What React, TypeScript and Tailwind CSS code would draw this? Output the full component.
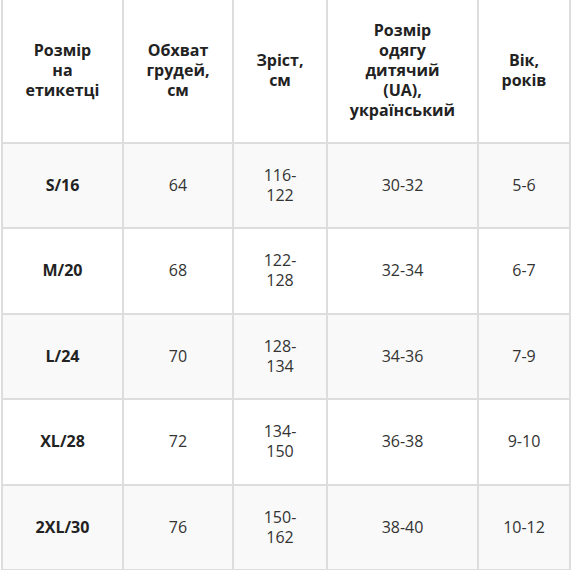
import React from "react";

const headers: string[][] = [
  ["Розмір", "на", "етикетці"],
  ["Обхват", "грудей,", "см"],
  ["Зріст,", "см"],
  ["Розмір", "одягу", "дитячий", "(UA),", "український"],
  ["Вік,", "років"],
];

const rows: string[][][] = [
  [["S/16"], ["64"], ["116-", "122"], ["30-32"], ["5-6"]],
  [["M/20"], ["68"], ["122-", "128"], ["32-34"], ["6-7"]],
  [["L/24"], ["70"], ["128-", "134"], ["34-36"], ["7-9"]],
  [["XL/28"], ["72"], ["134-", "150"], ["36-38"], ["9-10"]],
  [["2XL/30"], ["76"], ["150-", "162"], ["38-40"], ["10-12"]],
];

function Lines({ lines }: { lines: string[] }) {
  return (
    <>
      {lines.map((l, i) => (
        <span key={i} className="block whitespace-nowrap">
          {l}
        </span>
      ))}
    </>
  );
}

export default function App() {
  return (
    <div className="w-[574px] h-[570px] overflow-hidden bg-white">
      <div
        className="ml-[1px] w-[570px] grid grid-cols-[119px_108px_92px_149px_90px] grid-rows-[142px_83px_84px_83px_84px_83px] gap-[2px] bg-[#dddddd] px-[2px] pb-[2px] text-[16px] leading-[20px]"
        style={{ fontFamily: '"Open Sans", "Liberation Sans", sans-serif' }}
      >
        {headers.map((h, i) => (
          <div
            key={`h${i}`}
            className="bg-white flex flex-col items-center justify-center pb-[3px] text-center font-bold text-[#222222]"
          >
            <Lines lines={h} />
          </div>
        ))}
        {rows.map((r, ri) =>
          r.map((c, ci) => (
            <div
              key={`r${ri}c${ci}`}
              className={`${ri % 2 === 0 ? "bg-[#f9f9f9]" : "bg-white"} flex flex-col items-center justify-center pb-[2px] text-center ${
                ci === 0 ? "font-bold text-[#222222]" : "text-[#333333]"
              }`}
            >
              <Lines lines={c} />
            </div>
          ))
        )}
      </div>
    </div>
  );
}
